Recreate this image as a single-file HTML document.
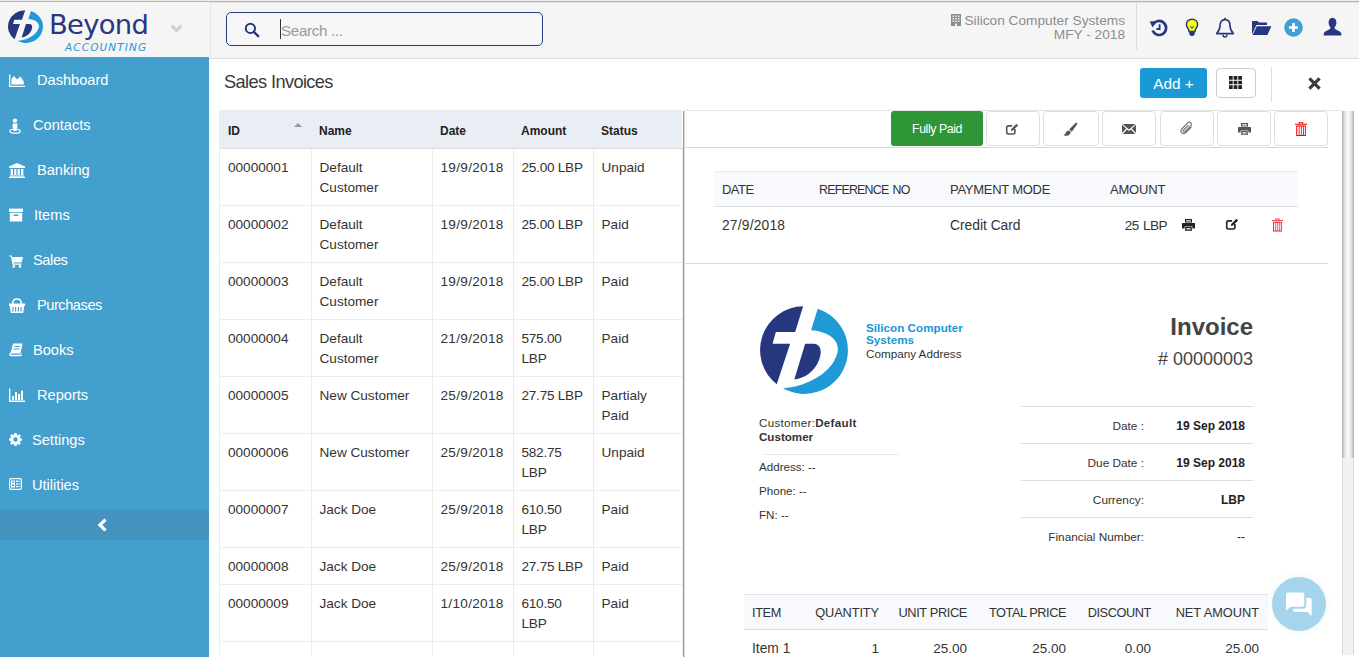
<!DOCTYPE html>
<html lang="en">
<head>
<meta charset="utf-8">
<title>Beyond Accounting - Sales Invoices</title>
<style>
*{box-sizing:border-box;margin:0;padding:0}
html,body{width:1359px;height:657px;overflow:hidden;background:#fff}
body{font-family:"Liberation Sans",sans-serif;font-size:14px;color:#333;position:relative}
.abs{position:absolute}
svg{display:block}

/* ---------- top bar ---------- */
#topline{left:0;top:0;width:1359px;height:3px;background:linear-gradient(to bottom,#ececec 0,#ececec 1px,#b4b4b4 1px,#b4b4b4 2px,#e4e4e4 2px,#e4e4e4 3px)}
#header{left:0;top:2px;width:1359px;height:57px;background:#f5f5f5;border-bottom:1px solid #dcdcdc}
#brand{left:0;top:2px;width:211px;height:55px;background:#f5f5f5;border-right:1px solid #e2e2e2}
#brand .logo{left:8px;top:8px}
#brand .name{left:49px;top:8px;font-family:"DejaVu Sans",sans-serif;font-size:27.4px;line-height:30px;color:#293680;letter-spacing:-0.7px;white-space:nowrap}
#brand .sub{left:65px;top:38px;font-family:"DejaVu Sans",sans-serif;font-style:italic;font-size:10.5px;line-height:14px;color:#1d97d4;letter-spacing:1.1px;white-space:nowrap}
#brand .chev{left:170px;top:22px}
#search{left:226px;top:12px;width:317px;height:34px;border:1px solid #2a3a85;border-radius:5px;background:#f7f7f7}
#search .ico{left:17px;top:9px}
#search .cursor{left:53px;top:6px;width:1px;height:20px;background:#333}
#search .ph{left:54px;top:8px;letter-spacing:-0.35px;font-size:15.2px;line-height:20px;color:#9a9a9a;white-space:nowrap}
#company{right:234px;top:14px;text-align:right;color:#8c8c8c;font-size:13.7px;line-height:13.5px;white-space:nowrap}
#company .bld{display:inline-block;vertical-align:-1px;margin-right:3px}
#hdiv{left:1136px;top:3px;width:1px;height:47px;background:#dcdcdc}
.hico{top:0}

/* ---------- sidebar ---------- */
#sidebar{left:0;top:57px;width:209px;height:600px;background:#439fcd}
#sidebar ul{list-style:none}
#sidebar li{height:45px;position:relative;color:#fff;font-size:14.6px;line-height:45px;white-space:nowrap}
#sidebar li svg{position:absolute;left:9px;top:16px}
#sidebar li span{position:absolute;top:1px}
#collapse{left:0;top:453px;width:209px;height:30px;background:#4594bf}
#collapse svg{position:absolute;left:96px;top:8px}

/* ---------- page title row ---------- */
#title{left:224px;top:70px;font-size:18.2px;line-height:24px;color:#3a3a3a;white-space:nowrap;letter-spacing:-0.6px}
#addbtn{left:1140px;top:68px;width:67px;height:30px;background:#1a99d6;border-radius:3px;color:#fff;font-size:15.3px;line-height:32px;text-align:center;white-space:nowrap}
#gridbtn{left:1216px;top:68px;width:40px;height:30px;background:#fff;border:1px solid #ccc;border-radius:4px}
#gridbtn svg{position:absolute;left:12px;top:7px}
#tdiv{left:1271px;top:67px;width:1px;height:35px;background:#ddd}
#closex{left:1307px;top:76px}

/* ---------- left list ---------- */
#list{left:219px;top:110px;width:464px;height:545px;overflow:hidden;border-left:1px solid #ececec;border-top:1px solid #ececec}
#list table{border-collapse:collapse;table-layout:fixed;width:462px}
#list td:nth-child(3){letter-spacing:0.3px}
#list td:nth-child(4){letter-spacing:-0.25px}
#list td:last-child{border-right:1px solid #ececec}
#list th{height:37px;background:#e9edf4;font-size:12px;font-weight:bold;text-align:left;padding:3px 8px 0 8px;color:#222;border-bottom:1px solid #ddd;position:relative;white-space:nowrap}
#list td{white-space:nowrap;padding:9px 0 7px 8px;font-size:13.6px;line-height:20px;vertical-align:top;border-bottom:1px solid #ececec;border-left:1px solid #ececec;color:#333}
#list td:first-child{border-left:none}
#list .sort{position:absolute;left:74px;top:12px;width:0;height:0;border-left:4px solid transparent;border-right:4px solid transparent;border-bottom:4px solid #999}
#lsep{left:683px;top:111px;width:2px;height:546px;background:linear-gradient(to right,#9a9a9a 0,#9a9a9a 50%,#dcdcdc 50%,#dcdcdc 100%)}

/* ---------- right panel ---------- */
#panel{left:684px;top:110px;width:675px;height:547px;overflow:hidden}
#ptop{left:0;top:0;width:658px;height:1px;background:#e4e4e4}
#toolbar{left:0;top:0;width:644px;height:38px;border-bottom:1px solid #d8d8d8}
.tbtn{top:1px;height:35px;background:#fff;border:1px solid #dedede;border-radius:4px}
.tbtn svg{position:absolute;left:50%;top:50%}
#paid{left:207px;top:1px;width:92px;height:35px;background:#2f9637;border-radius:3px;color:#fff;font-size:12.4px;line-height:37px;text-align:center;white-space:nowrap;letter-spacing:-0.45px}
#pay{left:30px;top:61px;width:585px}
#pay .hd{left:0;top:0;width:584px;height:36px;background:#f7f9fc;border-top:1px solid #ececec;border-bottom:1px solid #dcdcdc}
#pay .t{font-size:13.2px;line-height:20px;white-space:nowrap;color:#333}
#psep{left:0;top:153px;width:644px;height:1px;background:#dcdcdc}

#inv .t{white-space:nowrap}
#scroll{left:1342px;top:111px;width:12px;height:544px;background:#f1f1f1;border-left:1px solid #d9d9d9;border-right:1px solid #d9d9d9}
#thumb{left:1342px;top:111px;width:12px;height:347px;background:linear-gradient(to right,#a8a8a8 0,#dcdcdc 18%,#fbfbfb 50%,#dcdcdc 82%,#a8a8a8 100%)}
#chat{left:1272px;top:577px;width:54px;height:54px;border-radius:50%;background:#a4d5ed;box-shadow:0 0 8px rgba(0,0,0,.06)}
#chat svg{position:absolute;left:14px;top:15px}

.dl{right:215px;margin-top:1px;font-size:11.8px;line-height:14px;color:#333}
.dv{right:114px;margin-top:1px;font-size:12px;line-height:14px;font-weight:bold;color:#222}
.ih{top:493px;font-size:12.8px;line-height:20px;color:#333}
.ir{top:529px;font-size:13.5px;line-height:20px;color:#333}
</style>
</head>
<body>
<div id="header" class="abs"></div>
<div id="topline" class="abs"></div>

<!-- brand -->
<div id="brand" class="abs">
  <svg class="abs logo" width="35" height="33" preserveAspectRatio="none" viewBox="60 60 526 526"><path fill="#27377f" d="M318,62 A261,261 0 0 0 160,528 L240,285 L135,285 L155,215 L270,215 Z"/><path fill="#27377f" d="M330,285 L385,285 C432,290 432,350 405,400 C380,450 330,490 265,500 Z"/><path fill="#1f9ad7" d="M405,76 A261,261 0 1 1 197,552 C300,545 420,500 490,410 C515,370 528,340 525,310 C522,250 450,210 365,205 Z"/></svg>
  <div class="abs name">Beyond</div>
  <div class="abs sub">ACCOUNTING</div>
  <svg class="abs chev" width="13" height="10" viewBox="0 0 13 10"><path d="M0.6 2.8 L2.8 0.6 L6.5 4.2 L10.2 0.6 L12.4 2.8 L6.5 8.6 Z" fill="#cfcfcf"/></svg>
</div>
<!-- search -->
<div id="search" class="abs">
  <svg class="abs ico" width="16" height="16" viewBox="0 0 16 16"><circle cx="6.4" cy="6.4" r="4.6" fill="none" stroke="#27377f" stroke-width="2"/><path d="M9.8 9.8 L14.2 14.2" stroke="#27377f" stroke-width="2.4" stroke-linecap="round"/></svg>
  <div class="abs cursor"></div>
  <div class="abs ph">Search ...</div>
</div>
<!-- company -->
<div id="company" class="abs"><svg class="bld" width="10" height="12" viewBox="0 0 10 12"><path fill="#8c8c8c" d="M0 0h10v12H6V9.5H4V12H0z"/><g fill="#f5f5f5"><rect x="1.5" y="1.5" width="1.6" height="1.4"/><rect x="4.2" y="1.5" width="1.6" height="1.4"/><rect x="6.9" y="1.5" width="1.6" height="1.4"/><rect x="1.5" y="4" width="1.6" height="1.4"/><rect x="4.2" y="4" width="1.6" height="1.4"/><rect x="6.9" y="4" width="1.6" height="1.4"/><rect x="1.5" y="6.5" width="1.6" height="1.4"/><rect x="4.2" y="6.5" width="1.6" height="1.4"/><rect x="6.9" y="6.5" width="1.6" height="1.4"/></g></svg>Silicon Computer Systems<br>MFY - 2018</div>
<div id="hdiv" class="abs"></div>
<!-- header icons -->
<svg class="abs hico" style="left:1149px;top:18px" width="20" height="20" viewBox="0 0 20 20"><path d="M4.2 6.2 A7 7 0 1 1 3.6 12.6" fill="none" stroke="#27377f" stroke-width="2.7"/><path d="M0.8 3.2 L7.6 3.6 L3.4 9.4 Z" fill="#27377f"/><path d="M10.6 6.2 V11 H7.4" fill="none" stroke="#27377f" stroke-width="1.8"/></svg>
<svg class="abs hico" style="left:1184px;top:18px" width="16" height="20" viewBox="0 0 16 20"><path d="M8 1.2 C4.6 1.2 2.4 3.6 2.4 6.4 C2.4 8.6 3.8 9.8 4.6 11.4 L5 13.4 H11 L11.4 11.4 C12.2 9.8 13.6 8.6 13.6 6.4 C13.6 3.6 11.4 1.2 8 1.2 Z" fill="#ffff00" stroke="#27377f" stroke-width="1.5"/><path d="M5.2 13 H10.8 V15.6 C10.8 17 9.6 18 8 18 C6.4 18 5.2 17 5.2 15.6 Z" fill="#27377f"/><path d="M6.4 8 L8 10.4 L9.6 8" fill="none" stroke="#27377f" stroke-width="1"/></svg>
<svg class="abs hico" style="left:1214px;top:17px" width="22" height="22" viewBox="0 0 22 22"><path d="M11 2.6 C7.4 2.6 6 5.6 6 8.6 C6 12.4 4.6 14.6 2.6 16.6 H19.4 C17.4 14.6 16 12.4 16 8.6 C16 5.6 14.6 2.6 11 2.6 Z" fill="none" stroke="#27377f" stroke-width="1.6" stroke-linejoin="round"/><path d="M11 0.8 V2.6" stroke="#27377f" stroke-width="1.6"/><path d="M9 17.4 C9 19 10 20 11 20 C12 20 13 19 13 17.4" fill="none" stroke="#27377f" stroke-width="1.4"/></svg>
<svg class="abs hico" style="left:1251px;top:20px" width="21" height="16" viewBox="0 0 21 16"><path d="M1 14.6 V2 C1 1.4 1.4 1 2 1 H6.6 L8 2.6 H15 C15.6 2.6 16 3 16 3.6 V5 H5.4 L1 14.6 Z" fill="#27377f"/><path d="M5.8 6.2 H20.4 L16.4 15 H1.6 Z" fill="#27377f"/></svg>
<svg class="abs hico" style="left:1284px;top:18px" width="19" height="19" viewBox="0 0 19 19"><circle cx="9.5" cy="9.5" r="9.3" fill="#41a0d1"/><path d="M9.5 5 V14 M5 9.5 H14" stroke="#fff" stroke-width="2.6"/></svg>
<svg class="abs hico" style="left:1323px;top:17px" width="19" height="19" viewBox="0 0 19 19"><path d="M9.5 0.8 C6.8 0.8 5.6 3 5.6 5.6 C5.6 7.6 6.4 9.4 7.6 10.4 C7.4 12 6.4 12.6 3.6 13.8 C1.6 14.6 0.6 15.6 0.6 18.4 H18.4 C18.4 15.6 17.4 14.6 15.4 13.8 C12.6 12.6 11.6 12 11.4 10.4 C12.6 9.4 13.4 7.6 13.4 5.6 C13.4 3 12.2 0.8 9.5 0.8 Z" fill="#27377f"/></svg>


<!-- sidebar -->
<div id="sidebar" class="abs">
  <ul>
    <li><svg width="16" height="14" viewBox="0 0 16 14"><path fill="#fff" d="M0 1.6h1.3v11.2H16V14H0z"/><path fill="#fff" d="M2.4 11.6 V6 L5 3 L8 6.4 L11.4 3.6 L14.8 8.4 V11.6 Z"/></svg><span style="left:37px">Dashboard</span></li>
    <li><svg width="12" height="16" viewBox="0 0 12 16"><circle cx="6" cy="2.6" r="2.2" fill="#fff"/><path fill="#fff" d="M3.6 5.4 H8.4 V10 H7.6 V13 H4.4 V10 H3.6 Z"/><ellipse cx="6" cy="13.2" rx="5.2" ry="2" fill="none" stroke="#fff" stroke-width="1.2"/></svg><span style="left:33px">Contacts</span></li>
    <li><svg width="16" height="15" viewBox="0 0 16 15"><path fill="#fff" d="M8 0 L16 3.6 V5 H0 V3.6 Z"/><path fill="#fff" d="M1.6 6h2.4v6H1.6zM5.2 6h2.2v6H5.2zM8.6 6h2.2v6H8.6zM12 6h2.4v6H12z"/><path fill="#fff" d="M0.8 12.4 H15.2 V13.4 H0.8zM0 13.8 H16 V15 H0z"/></svg><span style="left:37px">Banking</span></li>
    <li><svg width="14" height="14" viewBox="0 0 14 14"><path fill="#fff" d="M0 0.6 H14 V4 H0z"/><path fill="#fff" d="M0.8 4.8 H13.2 V13.6 H0.8z M4.6 6.4 V8 H9.4 V6.4z" fill-rule="evenodd"/></svg><span style="left:34px">Items</span></li>
    <li><svg width="14" height="13" viewBox="0 0 14 13" style="top:18px"><path fill="#fff" d="M0 0.4 H2.6 L3.2 2 H14 L12.6 7.4 H4.4 L4.6 8.6 H12.4 V9.8 H3.4 L2 1.6 H0z"/><circle cx="4.8" cy="11.4" r="1.3" fill="#fff"/><circle cx="11" cy="11.4" r="1.3" fill="#fff"/></svg><span style="left:33px;letter-spacing:-0.4px">Sales</span></li>
    <li><svg width="16" height="15" viewBox="0 0 16 15"><path d="M3.6 6 C3.6 2.6 5.4 1 8 1 C10.6 1 12.4 2.6 12.4 6" fill="none" stroke="#fff" stroke-width="1.5"/><path fill="#fff" fill-rule="evenodd" d="M0 5.6 H16 V8 H15.2 L14.2 15 H1.8 L0.8 8 H0z M3.4 9 V13.4 H4.6 V9z M6 9 V13.4 H7.2 V9z M8.8 9 V13.4 H10 V9z M11.4 9 V13.4 H12.6 V9z"/></svg><span style="left:37px;letter-spacing:-0.45px">Purchases</span></li>
    <li><svg width="14" height="14" viewBox="0 0 14 14"><path fill="#fff" fill-rule="evenodd" d="M4 0.6 H13.6 L11.4 10.4 H2.4 C1.4 10.4 1.4 11.8 2.4 11.8 H11.6 L12 10.4 H13 L12.4 13.2 H2 C-0.4 13.2 -0.2 9.8 1.8 9.4 Z M5.4 3 L5.2 4 H10.8 L11 3z M4.8 5.4 L4.6 6.4 H10.2 L10.4 5.4z"/></svg><span style="left:33px">Books</span></li>
    <li><svg width="16" height="14" viewBox="0 0 16 14"><path fill="#fff" d="M0 0.6h1.4v12H16V14H0z"/><path fill="#fff" d="M3 8h2v4H3zM6 4h2v8H6zM9 6h2v6H9zM12 2.4h2V12h-2z"/></svg><span style="left:37px">Reports</span></li>
    <li><svg width="13" height="13" viewBox="0 0 13 13"><path fill="#fff" fill-rule="evenodd" d="M5.4 0 H7.6 L8 1.8 L9 2.3 L10.6 1.3 L11.9 2.7 L10.9 4.2 L11.3 5.2 L13 5.5 V7.6 L11.3 8 L10.9 9 L11.8 10.5 L10.4 11.9 L8.9 10.9 L8 11.3 L7.6 13 H5.4 L5 11.3 L4 10.9 L2.5 11.8 L1.1 10.4 L2.1 8.9 L1.7 8 L0 7.6 V5.4 L1.7 5 L2.1 4 L1.2 2.5 L2.6 1.1 L4.1 2.1 L5 1.7 Z M6.5 4.3 A2.2 2.2 0 1 0 6.5 8.7 A2.2 2.2 0 1 0 6.5 4.3z"/></svg><span style="left:32px">Settings</span></li>
    <li><svg width="13" height="12" viewBox="0 0 13 12"><rect x="0.6" y="0.6" width="11.8" height="10.8" rx="1.6" fill="none" stroke="#fff" stroke-width="1.2"/><path fill="#fff" d="M2 2.4 H6 V9.6 H2z M7 2.6 H9.4 V4 H7z M7 5.2 H9.4 V6.6 H7z M7 7.8 H9.4 V9.2 H7z M10 3h1.4v.8H10zM10 5.6h1.4v.8H10zM10 8.2h1.4v.8H10z"/><path fill="#439fcd" d="M3 3.6h2v1.2H3zM3 6.4h2v1.6H3z"/></svg><span style="left:32px">Utilities</span></li>
  </ul>
  <div id="collapse" class="abs"><svg width="12" height="14" viewBox="0 0 12 14"><path fill="#fff" d="M8.4 0.6 L10.6 2.8 L6.2 7 L10.6 11.2 L8.4 13.4 L1.6 7 Z"/></svg></div>
</div>
<!-- title row -->
<div id="title" class="abs">Sales Invoices</div>
<div id="addbtn" class="abs">Add +</div>
<div id="gridbtn" class="abs"><svg width="13" height="13" viewBox="0 0 14 14"><path fill="#222" d="M0 0h4v4H0zM5 0h4v4H5zM10 0h4v4h-4zM0 5h4v4H0zM5 5h4v4H5zM10 5h4v4h-4zM0 10h4v4H0zM5 10h4v4H5zM10 10h4v4h-4z"/></svg></div>
<div id="tdiv" class="abs"></div>
<svg id="closex" class="abs" width="15" height="15" viewBox="0 0 15 15"><path d="M2.4 2.4 L12.6 12.6 M12.6 2.4 L2.4 12.6" stroke="#3c3c3c" stroke-width="3.2"/></svg>

<!-- invoice list -->
<div id="list" class="abs">
  <table>
    <colgroup><col style="width:91px"><col style="width:121px"><col style="width:81px"><col style="width:80px"><col style="width:89px"></colgroup>
    <tr><th>ID<i class="sort"></i></th><th>Name</th><th>Date</th><th>Amount</th><th>Status</th></tr>
    <tr><td>00000001</td><td>Default<br>Customer</td><td>19/9/2018</td><td>25.00 LBP</td><td>Unpaid</td></tr>
    <tr><td>00000002</td><td>Default<br>Customer</td><td>19/9/2018</td><td>25.00 LBP</td><td>Paid</td></tr>
    <tr><td>00000003</td><td>Default<br>Customer</td><td>19/9/2018</td><td>25.00 LBP</td><td>Paid</td></tr>
    <tr><td>00000004</td><td>Default<br>Customer</td><td>21/9/2018</td><td>575.00<br>LBP</td><td>Paid</td></tr>
    <tr><td>00000005</td><td>New Customer</td><td>25/9/2018</td><td>27.75 LBP</td><td>Partialy<br>Paid</td></tr>
    <tr><td>00000006</td><td>New Customer</td><td>25/9/2018</td><td>582.75<br>LBP</td><td>Unpaid</td></tr>
    <tr><td>00000007</td><td>Jack Doe</td><td>25/9/2018</td><td>610.50<br>LBP</td><td>Paid</td></tr>
    <tr><td>00000008</td><td>Jack Doe</td><td>25/9/2018</td><td>27.75 LBP</td><td>Paid</td></tr>
    <tr><td>00000009</td><td>Jack Doe</td><td>1/10/2018</td><td>610.50<br>LBP</td><td>Paid</td></tr>
    <tr><td>00000010</td><td>Jack Doe</td><td>25/9/2018</td><td>27.75 LBP</td><td>Unpaid</td></tr>
  </table>
</div>
<div id="lsep" class="abs"></div>

<!-- right detail panel -->
<div id="panel" class="abs">
  <div id="toolbar" class="abs">
    <div id="paid" class="abs">Fully Paid</div>
    <div class="abs tbtn" style="left:302px;width:54px"><svg width="14" height="14" viewBox="0 0 13 13" style="margin:-7px 0 0 -8px"><path d="M9.2 6.6 V9.6 C9.2 10.6 8.6 11.2 7.6 11.2 H3.2 C2.2 11.2 1.6 10.6 1.6 9.6 V5.2 C1.6 4.2 2.2 3.6 3.2 3.6 H6.6" fill="none" stroke="#555" stroke-width="1.5"/><path d="M5.4 8.4 L5.8 6.4 L10.6 1.6 L12.2 3.2 L7.4 8 Z" fill="#555"/></svg></div>
    <div class="abs tbtn" style="left:359px;width:56px"><svg width="15" height="15" viewBox="0 0 15 15" style="margin:-7px 0 0 -8px"><path d="M12.6 0.8 C13.8 0.2 14.8 1.4 14 2.6 L8.8 9.8 L6.2 7.6 Z" fill="#555"/><path d="M6 8.4 L7.8 10 C7.6 12 6 13.6 3.6 13.8 C2.4 14 1 13.6 0.4 13 C2 12.6 2.6 11.8 3 10.6 C3.4 9.2 4.6 8.4 6 8.4 Z" fill="#555"/></svg></div>
    <div class="abs tbtn" style="left:418px;width:54px"><svg width="14" height="10" viewBox="0 0 14 10" style="margin:-5px 0 0 -7px"><path fill="#555" d="M0.6 0 H13.4 L7 5.4 Z"/><path fill="#555" d="M0 0.8 L4.2 4.6 L0 9 Z M14 0.8 L9.8 4.6 L14 9 Z M5 5.4 L7 7 L9 5.4 L13.2 10 H0.8 Z"/></svg></div>
    <div class="abs tbtn" style="left:476px;width:54px"><svg width="15" height="15" viewBox="0 0 14 14" style="margin:-8px 0 0 -8px"><path d="M11.6 5.6 L6.4 10.8 C5.2 12 3.6 12 2.6 11 C1.6 10 1.6 8.4 2.8 7.2 L8.2 1.8 C9 1 10.2 1 11 1.8 C11.8 2.6 11.8 3.8 11 4.6 L5.8 9.8 C5.4 10.2 4.8 10.2 4.4 9.8 C4 9.4 4 8.8 4.4 8.4 L9 3.8" fill="none" stroke="#777" stroke-width="1.1"/></svg></div>
    <div class="abs tbtn" style="left:533px;width:54px"><svg width="13" height="12" viewBox="0 0 13 12" style="margin:-6px 0 0 -6px"><path fill="#555" fill-rule="evenodd" d="M3 0 H10 V3.4 H3z M4.2 1.2 V2.4 H8.8 V1.2z"/><path fill="#555" d="M0.6 4 H12.4 C12.8 4 13 4.2 13 4.6 V9.4 H10.4 V7.4 H2.6 V9.4 H0 V4.6 C0 4.2 0.2 4 0.6 4z"/><path fill="#555" fill-rule="evenodd" d="M3.2 8 H9.8 V12 H3.2z M4.4 9 V9.8 H8.6 V9z M4.4 10.4 V11.2 H8.6 V10.4z"/></svg></div>
    <div class="abs tbtn" style="left:590px;width:54px"><svg width="12" height="14" viewBox="0 0 12 14" style="margin:-7px 0 0 -6px"><path fill="#f20000" fill-rule="evenodd" d="M3.8 0 H8.2 V1.8 H12 V2.8 H0 V1.8 H3.8z M4.7 0.8 V1.8 H7.3 V0.8z"/><path fill="#f20000" fill-rule="evenodd" d="M1.2 3.6 H10.8 V14 H1.2z M2.2 4.6 V13 H3.7 V4.6z M4.5 4.6 V13 H5.9 V4.6z M6.7 4.6 V13 H8.1 V4.6z M8.9 4.6 V13 H9.9 V4.6z"/></svg></div>
  </div>
  <div id="ptop" class="abs"></div>
  <!-- payments -->
  <div id="pay" class="abs">
    <div class="abs hd"></div>
    <div class="abs t" style="left:8px;top:9px;font-size:13px;letter-spacing:-0.55px">DATE</div>
    <div class="abs t" style="left:105px;top:9px;font-size:12.4px;letter-spacing:-0.78px;word-spacing:1.5px">REFERENCE NO</div>
    <div class="abs t" style="left:236px;top:9px;font-size:13px;letter-spacing:-0.27px">PAYMENT MODE</div>
    <div class="abs t" style="left:396px;top:9px;font-size:13px;letter-spacing:-0.2px">AMOUNT</div>
    <div class="abs t" style="left:8px;top:45px;font-size:13.8px;letter-spacing:0.2px">27/9/2018</div>
    <div class="abs t" style="left:236px;top:45px;font-size:13.8px">Credit Card</div>
    <div class="abs t" style="right:132px;top:45px;font-size:13.6px;letter-spacing:-0.6px;word-spacing:1.2px">25 LBP</div>
    <div class="abs" style="left:468px;top:48px"><svg width="13" height="12" viewBox="0 0 13 12"><path fill="#222" fill-rule="evenodd" d="M3 0 H10 V3.4 H3z M4.2 1.2 V2.4 H8.8 V1.2z"/><path fill="#222" d="M0.6 4 H12.4 C12.8 4 13 4.2 13 4.6 V9.4 H10.4 V7.4 H2.6 V9.4 H0 V4.6 C0 4.2 0.2 4 0.6 4z"/><path fill="#222" fill-rule="evenodd" d="M3.2 8 H9.8 V12 H3.2z M4.4 9 V9.8 H8.6 V9z M4.4 10.4 V11.2 H8.6 V10.4z"/></svg></div>
    <div class="abs" style="left:511px;top:46px"><svg width="14" height="14" viewBox="0 0 13 13"><path d="M9.2 6.6 V9.6 C9.2 10.6 8.6 11.2 7.6 11.2 H3.2 C2.2 11.2 1.6 10.6 1.6 9.6 V5.2 C1.6 4.2 2.2 3.6 3.2 3.6 H6.6" fill="none" stroke="#222" stroke-width="1.5"/><path d="M5.4 8.4 L5.8 6.4 L10.6 1.6 L12.2 3.2 L7.4 8 Z" fill="#222"/></svg></div>
    <div class="abs" style="left:558px;top:47px"><svg width="11" height="14" viewBox="0 0 12 14"><path fill="#f21f2c" fill-rule="evenodd" d="M3.8 0 H8.2 V1.8 H12 V2.8 H0 V1.8 H3.8z M4.7 0.8 V1.8 H7.3 V0.8z"/><path fill="#f21f2c" fill-rule="evenodd" d="M1.2 3.6 H10.8 V14 H1.2z M2.2 4.6 V13 H3.7 V4.6z M4.5 4.6 V13 H5.9 V4.6z M6.7 4.6 V13 H8.1 V4.6z M8.9 4.6 V13 H9.9 V4.6z"/></svg></div>
  </div>
  <div id="psep" class="abs"></div>
  <!-- invoice preview -->
  <div id="inv">
    <svg class="abs" style="left:76px;top:196px" width="88" height="88" viewBox="60 60 526 526"><path fill="#27377f" d="M318,62 A261,261 0 0 0 160,528 L240,285 L135,285 L155,215 L270,215 Z"/><path fill="#27377f" d="M330,285 L385,285 C432,290 432,350 405,400 C380,450 330,490 265,500 Z"/><path fill="#1f9ad7" d="M405,76 A261,261 0 1 1 197,552 C300,545 420,500 490,410 C515,370 528,340 525,310 C522,250 450,210 365,205 Z"/></svg>
    <div class="abs t" style="left:182px;top:212px;font-size:11.7px;line-height:12px;font-weight:bold;color:#1b96d3">Silicon Computer<br>Systems</div>
    <div class="abs t" style="left:182px;top:237px;font-size:11.7px;line-height:14px;color:#333">Company Address</div>
    <div class="abs t" style="left:75px;top:306px;font-size:11.6px;line-height:14px;color:#333"><span style="letter-spacing:0.3px">Customer:<b>Default</b></span><br><b>Customer</b></div>
    <div class="abs" style="left:80px;top:344px;width:135px;height:1px;background:#e6e6e6"></div>
    <div class="abs t" style="left:75px;top:350px;font-size:11.6px;line-height:14px">Address: --</div>
    <div class="abs t" style="left:75px;top:374px;font-size:11.6px;line-height:14px">Phone: --</div>
    <div class="abs t" style="left:75px;top:398px;font-size:11.6px;line-height:14px">FN: --</div>

    <div class="abs t" style="right:106px;top:203px;font-size:24px;line-height:28px;font-weight:bold;color:#444">Invoice</div>
    <div class="abs t" style="right:106px;top:238px;font-size:18px;line-height:22px;color:#444">#&nbsp;00000003</div>

    <div class="abs" style="left:337px;top:296px;width:232px;height:1px;background:#dedede"></div>
    <div class="abs" style="left:337px;top:333px;width:232px;height:1px;background:#dedede"></div>
    <div class="abs" style="left:337px;top:370px;width:232px;height:1px;background:#dedede"></div>
    <div class="abs" style="left:337px;top:407px;width:232px;height:1px;background:#dedede"></div>
    <div class="abs t dl" style="top:308px">Date :</div><div class="abs t dv" style="top:308px">19 Sep 2018</div>
    <div class="abs t dl" style="top:345px">Due Date :</div><div class="abs t dv" style="top:345px">19 Sep 2018</div>
    <div class="abs t dl" style="top:382px">Currency:</div><div class="abs t dv" style="top:382px">LBP</div>
    <div class="abs t dl" style="top:419px">Financial Number:</div><div class="abs t dv" style="top:419px;font-weight:normal">--</div>

    <!-- items -->
    <div class="abs" style="left:60px;top:484px;width:524px;height:36px;background:#f7f9fc;border-top:1px solid #e6e6e6;border-bottom:1px solid #dcdcdc"></div>
    <div class="abs t ih" style="left:68px;letter-spacing:-0.39px">ITEM</div>
    <div class="abs t ih" style="right:480px;letter-spacing:-0.12px">QUANTITY</div>
    <div class="abs t ih" style="right:392px;letter-spacing:-0.37px">UNIT PRICE</div>
    <div class="abs t ih" style="right:293px;letter-spacing:-0.47px">TOTAL PRICE</div>
    <div class="abs t ih" style="right:208px;letter-spacing:-0.44px">DISCOUNT</div>
    <div class="abs t ih" style="right:100px;letter-spacing:-0.03px">NET AMOUNT</div>
    <div class="abs t ir" style="left:68px;font-size:13.8px">Item 1</div>
    <div class="abs t ir" style="right:480px">1</div>
    <div class="abs t ir" style="right:392px">25.00</div>
    <div class="abs t ir" style="right:293px">25.00</div>
    <div class="abs t ir" style="right:208px">0.00</div>
    <div class="abs t ir" style="right:100px">25.00</div>
  </div>
</div>
<div id="scroll" class="abs"></div>
<div id="thumb" class="abs"></div>
<div id="chat" class="abs"><svg width="26" height="25" viewBox="0 0 29 27"><path fill="#fff" d="M2.4 0 H18 C19.4 0 20.4 1 20.4 2.4 V13.6 C20.4 15 19.4 16 18 16 H5 L0 20.6 V2.4 C0 1 1 0 2.4 0z"/><path fill="#fff" d="M22.6 6 H26 C27.6 6 28.6 7 28.6 8.6 V26.4 L24 21.8 H10 C8.6 21.8 7.6 20.8 7.6 19.4 V18.2 H19 C21 18.2 22.6 16.6 22.6 14.6z"/></svg></div>
</body>
</html>
